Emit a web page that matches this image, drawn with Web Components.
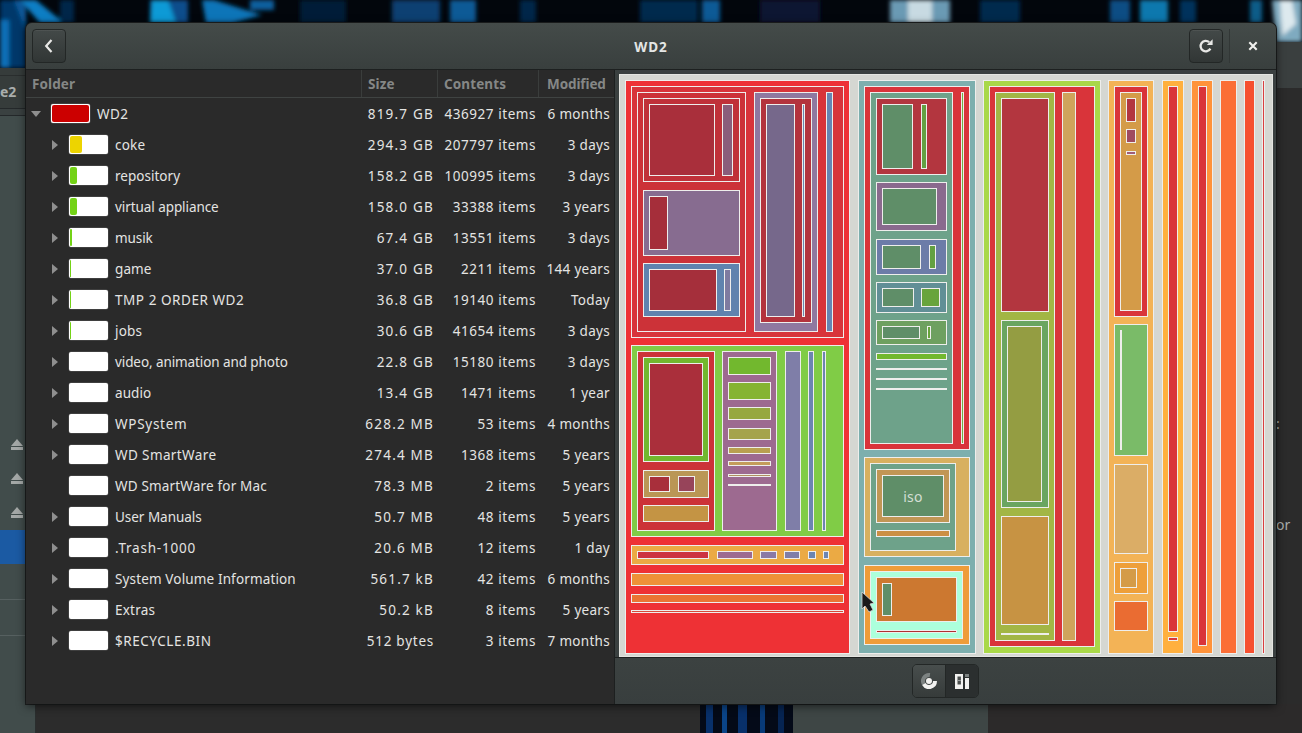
<!DOCTYPE html>
<html><head><meta charset="utf-8"><title>WD2</title>
<style>
html,body{margin:0;padding:0;width:1302px;height:733px;overflow:hidden;background:#2b2b2b}
</style></head><body>
<du-desktop>
<du-window title="WD2">
  <du-tree slot="left">
    <du-row level="0" open name="WD2" size="819.7 GB" items="436927 items" mod="6 months" fill="100" color="#cc0000" ls=".4"></du-row>
    <du-row name="coke" size="294.3 GB" items="207797 items" mod="3 days" fill="12" color="#edd400" ls=".22"></du-row>
    <du-row name="repository" size="158.2 GB" items="100995 items" mod="3 days" fill="7" color="#73d216" ls=".02"></du-row>
    <du-row name="virtual appliance" size="158.0 GB" items="33388 items" mod="3 years" fill="7" color="#73d216" ls="-.07"></du-row>
    <du-row name="musik" size="67.4 GB" items="13551 items" mod="3 days" fill="2" color="#73d216" ls="-.1"></du-row>
    <du-row name="game" size="37.0 GB" items="2211 items" mod="144 years" fill="1" color="#73d216" ls=".1"></du-row>
    <du-row name="TMP 2 ORDER WD2" size="36.8 GB" items="19140 items" mod="Today" fill="1" color="#73d216" ls=".55"></du-row>
    <du-row name="jobs" size="30.6 GB" items="41654 items" mod="3 days" fill="1" color="#73d216" ls=".2"></du-row>
    <du-row name="video, animation and photo" size="22.8 GB" items="15180 items" mod="3 days" ls="-.09"></du-row>
    <du-row name="audio" size="13.4 GB" items="1471 items" mod="1 year" ls=".1"></du-row>
    <du-row name="WPSystem" size="628.2 MB" items="53 items" mod="4 months" ls=".72"></du-row>
    <du-row name="WD SmartWare" size="274.4 MB" items="1368 items" mod="5 years" ls=".39"></du-row>
    <du-row leaf name="WD SmartWare for Mac" size="78.3 MB" items="2 items" mod="5 years" ls=".17"></du-row>
    <du-row name="User Manuals" size="50.7 MB" items="48 items" mod="5 years" ls="-.03"></du-row>
    <du-row name=".Trash-1000" size="20.6 MB" items="12 items" mod="1 day" ls=".77"></du-row>
    <du-row name="System Volume Information" size="561.7 kB" items="42 items" mod="6 months" ls=".14"></du-row>
    <du-row name="Extras" size="50.2 kB" items="8 items" mod="5 years" ls=".22"></du-row>
    <du-row name="$RECYCLE.BIN" size="512 bytes" items="3 items" mod="7 months" ls=".55" sls=".75"></du-row>
  </du-tree>
  <du-treemap slot="right"></du-treemap>
</du-window>
</du-desktop>
<script>
const FONT = `"Noto Sans","Open Sans",sans-serif`;
function def(name, css, html, init){
  customElements.define(name, class extends HTMLElement{
    connectedCallback(){
      if(this.shadowRoot) return;
      const r=this.attachShadow({mode:'open'});
      r.innerHTML=`<style>${css}</style>`+(typeof html==='function'?html(this):html);
      if(init) init(this,r);
    }
  });
}

def('du-desktop',`
:host{display:block;position:relative;width:1302px;height:733px;overflow:hidden;background:#2b2b2b;font-family:${FONT}}
svg.w{position:absolute;left:0;top:0}
.t{position:absolute;color:#a9adac;font-size:14px;white-space:nowrap}
.pos{position:absolute;left:26px;top:23px;width:1250px;height:681px}
.cursor{position:absolute;left:860px;top:591px}
`,`
<svg class="w" width="1302" height="733" viewBox="0 0 1302 733">
 <defs><filter id="b" x="-20%" y="-20%" width="140%" height="140%"><feGaussianBlur stdDeviation="2"/></filter></defs>
 <rect width="1302" height="733" fill="#2b2b2b"/>
 <rect width="1302" height="70" fill="#02060c"/>
 <g filter="url(#b)">
  <polygon points="0,0 26,0 26,68 0,68" fill="#05396a"/>
  <polygon points="0,20 9,20 9,68 0,68" fill="#0a6fb8"/>
  <polygon points="20,0 36,0 64,23 40,23" fill="#0a7ec4"/>
  <polygon points="14,0 20,0 26,12 26,30" fill="#0a5a9c"/>
  <rect x="60" y="0" width="14" height="23" fill="#062548"/>
  <rect x="150" y="0" width="38" height="23" fill="#084e8c"/>
  <polygon points="152,0 168,0 176,23 150,23" fill="#0a9ad6"/>
  <polygon points="202,0 214,0 262,15 232,23 206,23" fill="#0a74b8"/>
  <rect x="250" y="0" width="24" height="10" fill="#0a5f9e"/>
  <rect x="300" y="0" width="46" height="23" fill="#041c38"/>
  <rect x="392" y="0" width="48" height="23" fill="#083f72"/>
  <rect x="450" y="0" width="26" height="23" fill="#085a96"/>
  <rect x="520" y="0" width="16" height="23" fill="#052548"/>
  <rect x="640" y="0" width="58" height="23" fill="#062a4e"/>
  <rect x="702" y="0" width="18" height="23" fill="#085a96"/>
  <rect x="760" y="0" width="60" height="23" fill="#081830"/>
  <rect x="890" y="0" width="60" height="23" fill="#6a9ab4"/>
  <rect x="908" y="0" width="24" height="23" fill="#c8dae2"/>
  <rect x="980" y="0" width="40" height="23" fill="#062a4e"/>
  <rect x="1110" y="0" width="20" height="23" fill="#084e84"/>
  <rect x="1140" y="0" width="28" height="23" fill="#0a78ae"/>
  <rect x="1180" y="0" width="16" height="23" fill="#06335c"/>
  <rect x="1250" y="0" width="12" height="23" fill="#085c88"/>
  <polygon points="1272,0 1302,0 1302,42 1276,42" fill="#7faac0"/>
  <polygon points="1280,0 1292,0 1296,24 1282,36" fill="#dde9ee"/>
 </g>
 <rect x="0" y="68" width="30" height="40" fill="#363c3b"/>
 <rect x="0" y="75" width="30" height="1" fill="#2a2e2e"/>
 <rect x="0" y="108" width="30" height="1" fill="#24282a"/>
 <rect x="0" y="109" width="30" height="7" fill="#3a4141"/>
 <rect x="0" y="115" width="30" height="1" fill="#24282a"/>
 <rect x="0" y="116" width="36" height="617" fill="#414c4b"/>
 <rect x="35" y="116" width="1" height="617" fill="#2a2e2e"/>
 <rect x="0" y="530" width="30" height="34" fill="#1b5aa3"/>
 <rect x="0" y="599" width="30" height="1" fill="#566060"/>
 <rect x="0" y="635" width="30" height="1" fill="#566060"/>
 <g fill="#a4a8a7">
  <path d="M11 446 L17 439 L23 446 Z"/><rect x="11" y="447" width="12" height="3"/>
  <path d="M11 480 L17 473 L23 480 Z"/><rect x="11" y="481" width="12" height="3"/>
  <path d="M11 514 L17 507 L23 514 Z"/><rect x="11" y="515" width="12" height="3"/>
 </g>
 <rect x="1276" y="42" width="26" height="46" fill="#3a3f3f"/>
 <rect x="1276" y="88" width="26" height="645" fill="#2b2b2b"/>
 <rect x="36" y="704" width="664" height="29" fill="#2c2c2c"/>
 <rect x="700" y="704" width="93" height="29" fill="#040a18"/>
 <rect x="706" y="704" width="7" height="29" fill="#08306a"/>
 <rect x="722" y="704" width="5" height="29" fill="#0a4488"/>
 <rect x="738" y="704" width="9" height="29" fill="#08306a"/>
 <rect x="760" y="704" width="5" height="29" fill="#083a78"/>
 <rect x="778" y="704" width="6" height="29" fill="#062452"/>
 <rect x="793" y="704" width="195" height="29" fill="#3e4645"/>
 <rect x="988" y="704" width="314" height="29" fill="#2c2a2a"/>
</svg>
<span class="t" style="left:0;top:82px;font-weight:700;font-size:14px">e2</span>
<span class="t" style="left:1276px;top:414px">:</span>
<span class="t" style="left:1276px;top:515px">or</span>
<div class="pos"><slot></slot></div>
<svg class="cursor" width="16" height="24" viewBox="0 0 16 24"><path d="M2 1 L2 18 L5 15 L9 21 L13 19 L10 13 L14 12 Z" fill="#1a1a1a" stroke="#d8d8d8" stroke-width=".8" stroke-linejoin="round"/></svg>
`);

const btn=`display:flex;align-items:center;justify-content:center;box-sizing:border-box;width:34px;height:34px;border:1px solid #232726;border-radius:4px;background:linear-gradient(#434948,#313635);box-shadow:inset 0 1px 0 rgba(255,255,255,.06)`;

def('du-window',`
:host{display:flex;flex-direction:column;width:1250px;height:681px;border-radius:6px 6px 0 0;background:#2a2a2a;box-shadow:0 2px 10px rgba(0,0,0,.6),0 0 0 1px #1f2222;overflow:hidden;color:#eeeeec}
header{display:grid;grid-template-columns:1fr auto 1fr;align-items:center;box-sizing:border-box;height:47px;flex:none;background:linear-gradient(#444b49,#393f3e);border-bottom:1px solid #1d2020}
.start{display:flex;justify-content:flex-start;padding-left:6px}
.end{display:flex;justify-content:flex-end;align-items:center}
h1{margin:0;padding-top:1px;text-align:center;font-size:13.5px;font-weight:700;color:#e4e6e5;letter-spacing:.9px}
.b{${btn};flex:none}
.sep{width:1px;height:34px;background:#323736;margin:0 0 0 6px;flex:none}
.x{width:46px;flex:none;display:flex;justify-content:center}
main{flex:1;display:flex;min-height:0}
.l{width:588px;flex:none;background:#2a2a2a}
.r{flex:1;min-width:0;display:flex;flex-direction:column;background:#3a4040;border-left:1px solid #1d2020}
.foot{height:47px;flex:none;display:flex;align-items:center;justify-content:center;background:linear-gradient(#3c4241,#383e3e);border-top:1px solid #1d2020;box-sizing:border-box}
.seg{display:flex;border:1px solid #232726;border-radius:5px;overflow:hidden;height:34px;box-sizing:border-box;width:67px}
.seg div{flex:1;display:flex;align-items:center;justify-content:center}
.seg .off{background:linear-gradient(#484e4d,#363b3a);border-right:1px solid #232726}
.seg .on{background:#2b2f2f}
`,t=>`
<header>
  <div class="start"><div class="b"><svg width="12" height="16" viewBox="0 0 12 16"><path d="M8.5 2 L3.2 8 L8.5 14" fill="none" stroke="#e8e8e6" stroke-width="2.2"/></svg></div></div>
  <h1>${t.getAttribute('title')}</h1>
  <div class="end"><div class="b"><svg width="16" height="16" viewBox="0 0 16 16"><path d="M12.4 10.6 A5.2 5.2 0 1 1 11.2 4.2" fill="none" stroke="#e8e8e6" stroke-width="2.3"/><path d="M8.8 7 L14.6 7 L14.6 1.2 Z" fill="#e8e8e6"/></svg></div>
  <div class="sep"></div>
  <div class="x"><svg width="10" height="10" viewBox="0 0 10 10"><path d="M1.3 1.3 L8.7 8.7 M8.7 1.3 L1.3 8.7" stroke="#f0f0ee" stroke-width="2.1"/></svg></div></div>
</header>
<main>
  <div class="l"><slot name="left"></slot></div>
  <div class="r"><slot name="right"></slot>
    <div class="foot"><div class="seg">
      <div class="off"><svg width="16" height="16" viewBox="0 0 16 16"><path d="M2.8 11 A6 6 0 0 1 8.9 2.1" fill="none" stroke="#7c8281" stroke-width="4"/><path d="M2.8 11 A6 6 0 0 0 14 8" fill="none" stroke="#f2f2f0" stroke-width="4"/><circle cx="8" cy="8" r="3" fill="#f2f2f0"/></svg></div>
      <div class="on"><svg width="16" height="16" viewBox="0 0 16 16"><path d="M1 1h8v15H1z" fill="#f2f2f0"/><rect x="3.5" y="3.5" width="3.4" height="8" fill="#4a4e4d"/><rect x="3.5" y="7" width="3.4" height="1" fill="#9a9e9d"/><rect x="11" y="1" width="4" height="3" fill="#7c8281"/><rect x="11" y="5" width="4" height="11" fill="#f2f2f0"/></svg></div>
    </div></div>
  </div>
</main>`);

def('du-tree',`
:host{display:block;font-size:13.5px}
.head{display:flex;height:28px;box-sizing:border-box;border-bottom:1px solid #3f4342;font-weight:700;color:#858786;align-items:center;letter-spacing:.1px}
.head div{box-sizing:border-box;height:100%;display:flex;align-items:center;padding-left:6px;border-right:1px solid #3a3d3c}
.head div:last-child{border-right:none;padding-left:8px;letter-spacing:-.1px}
.n{flex:none;width:336px}.s{width:76px}.c{width:101px}.m{width:75px}
`,`
<div class="head"><div class="n">Folder</div><div class="s">Size</div><div class="c">Contents</div><div class="m">Modified</div></div>
<slot></slot>`);

def('du-row',`
:host{display:flex;align-items:center;height:31px;padding-right:4px;color:#e4e4e2;white-space:nowrap}
.ex{box-sizing:border-box;flex:none;display:flex;align-items:center}
.bar{box-sizing:border-box;flex:none;width:39px;height:19px;background:#fff;border-radius:2px;padding:1px;display:flex;box-shadow:0 0 0 .5px #555}
.fill{height:100%;border-radius:2px}
.n{flex:1;min-width:0;padding-left:7px}
.v{text-align:right;flex:none}
.s{width:74px;letter-spacing:1.2px}.c{width:102px;letter-spacing:.55px}.m{width:74px;letter-spacing:.3px}
`,t=>{
 const lvl=t.getAttribute('level')==='0';
 const open=t.hasAttribute('open'), leaf=t.hasAttribute('leaf');
 const f=+t.getAttribute('fill')||0, col=t.getAttribute('color')||'#fff';
 const tri=leaf?'':open
  ?`<svg width="10" height="6" viewBox="0 0 10 6"><path d="M0 0H10L5 6Z" fill="#8f8f8f"/></svg>`
  :`<svg width="6" height="10" viewBox="0 0 6 10"><path d="M0 0V10L6 5Z" fill="#8f8f8f"/></svg>`;
 const ind=lvl?25:43, pad=lvl?5:26, w=lvl?37:f;
 const ls=t.getAttribute('ls')||'.1', sls=t.getAttribute('sls');
 return `<div class="ex" style="width:${ind}px;padding-left:${pad}px">${tri}</div>
 <div class="bar">${f?`<div class="fill" style="width:${w}px;background:${col}"></div>`:''}</div>
 <div class="n" style="letter-spacing:${ls}px">${t.getAttribute('name')}</div>
 <div class="v s"${sls?` style="letter-spacing:${sls}px"`:''}>${t.getAttribute('size')}</div>
 <div class="v c">${t.getAttribute('items')}</div>
 <div class="v m">${t.getAttribute('mod')}</div>`;
});

const W='#eeeeec';
const RECTS=[
[625,80,850,654,'#ee3135'],
[631,86,844,338,'#d8343a'],[637,92,746,332,'#cc3238'],[643,98,740,182,'#c03139'],
[649,104,715,176,'#a92f3b'],[722,104,733,176,'#8a5d7b'],
[643,190,740,256,'#876c90'],[649,196,668,250,'#a52e3a'],
[643,263,740,317,'#6083ae'],[649,269,717,311,'#a52f3b'],[724,269,731,311,'#7f7ba0'],
[754,92,818,332,'#8f78a0'],[760,98,812,323,'#b3333d'],[766,104,795,317,'#76688b'],[802,104,805,317,'#6a85b0'],
[826,92,833,332,'#6685b3'],
[631,345,844,537,'#80cc46'],[637,351,715,531,'#cc3238'],[643,357,709,462,'#72b82e'],[649,363,703,456,'#aa2f3b'],
[643,470,709,498,'#ba9655'],[649,476,670,492,'#a82f3b'],[678,476,695,492,'#97445a'],[643,505,709,522,'#c49444'],
[722,351,777,531,'#9d6a90'],[728,357,771,375,'#72b82e'],[728,382,771,400,'#85b432'],[728,407,771,420,'#96a840'],
[728,428,771,440,'#a5a34c'],[728,447,771,454,'#b9a050'],[728,461,771,466,'#c49d5a'],[728,474,771,477,'#b09060'],[728,484,771,486,W],
[785,351,801,531,'#7f7ea8'],[808,351,814,531,'#6c85b1'],[822,351,826,531,'#6c85b1'],
[631,545,844,565,'#ebaa44'],[637,551,709,559,'#cc3340'],[717,551,753,559,'#9d6a90'],[760,551,777,559,'#8a7aa5'],[784,551,800,559,'#7f7ea8'],[808,551,816,559,'#6c85b1'],[823,551,829,559,'#6c85b1'],
[631,573,844,586,'#ee9138'],[631,594,844,603,'#ea7433'],[631,610,844,613,'#d84a3a'],
[858,80,976,654,'#7dafae'],[864,86,970,450,'#d9343a'],[870,92,953,444,'#6ea28a'],
[876,98,947,175,'#b3363f'],[882,104,913,169,'#5f8e68'],[921,104,927,169,'#63a042'],
[876,182,947,231,'#8a6a8e'],[882,188,937,225,'#5f8e68'],
[876,239,947,275,'#6c7ca8'],[882,245,921,269,'#5f8e68'],[929,245,936,269,'#63a042'],
[876,282,947,313,'#618f96'],[882,288,914,307,'#5f8e68'],[921,288,940,307,'#68a43c'],
[876,320,947,345,'#6ea060'],[882,326,920,339,'#5f8e68'],[927,326,931,339,'#68a43c'],
[876,353,947,360,'#72b82e'],[876,368,947,370,W],[876,378,947,380,W],[876,388,947,390,W],
[961,92,964,444,'#72b040'],
[864,457,970,557,'#d8b060'],[870,463,956,551,'#6ea28a'],[876,469,950,523,'#c19655'],[882,475,944,517,'#5f8e68','iso'],[876,530,950,537,'#cc8f44'],
[864,565,970,645,'#ef9c3a'],[870,571,963,639,'#acffdc'],[876,577,957,622,'#cc7830'],[882,583,892,616,'#5f8e68'],[876,630,957,633,'#b03030'],
[983,80,1101,654,'#a9d848'],[989,86,1095,647,'#d9343a'],[995,92,1055,641,'#a2b645'],
[1001,98,1049,312,'#b3363f'],[1001,320,1049,508,'#6aa560'],[1007,326,1042,502,'#949d42'],[1001,516,1049,625,'#c79343'],[1001,633,1049,635,W],
[1062,92,1076,641,'#cfa35c'],
[1108,80,1154,654,'#f3b356'],[1114,86,1148,317,'#d9343a'],[1120,92,1142,311,'#d49b48'],[1126,98,1136,122,'#b3363f'],[1126,129,1136,143,'#a04b60'],[1126,151,1136,155,'#a05c78'],
[1114,324,1148,456,'#7abb68'],[1120,330,1122,450,W],[1114,464,1148,554,'#dbad66'],[1114,562,1148,594,'#ee9f3a'],[1120,568,1137,588,'#d49b48'],[1114,601,1148,631,'#ea6c32'],
[1162,80,1184,654,'#ffb03e'],[1168,86,1178,632,'#d9343a'],[1168,637,1178,641,'#d9343a'],
[1191,80,1213,654,'#ff933a'],[1198,86,1207,646,'#d9343a'],
[1220,80,1237,654,'#fb6e36'],[1244,80,1255,654,'#f6502f'],[1262,80,1265,654,'#d94040'],
];
def('du-treemap',`
:host{display:block;position:relative;flex:1;min-height:0;margin:4px 3px 0 4px;background:#d5d7d2;box-shadow:inset 0 0 0 1px #e4e5e1}
.r{position:absolute;box-sizing:border-box;border:1px solid #eeeeec;display:flex;align-items:center;justify-content:center;color:#d4dfd4;font-size:14px;letter-spacing:.3px;overflow:hidden}
`,``,(t,r)=>{
 const OX=619,OY=74;
 for(const [a,b,c,d,col,txt] of RECTS){
  const e=document.createElement('div');e.className='r';
  e.style.cssText=`left:${a-OX}px;top:${b-OY}px;width:${c-a}px;height:${d-b}px;background:${col}`;
  if(txt) e.textContent=txt;
  r.appendChild(e);
 }
});
</script>
</body></html>
